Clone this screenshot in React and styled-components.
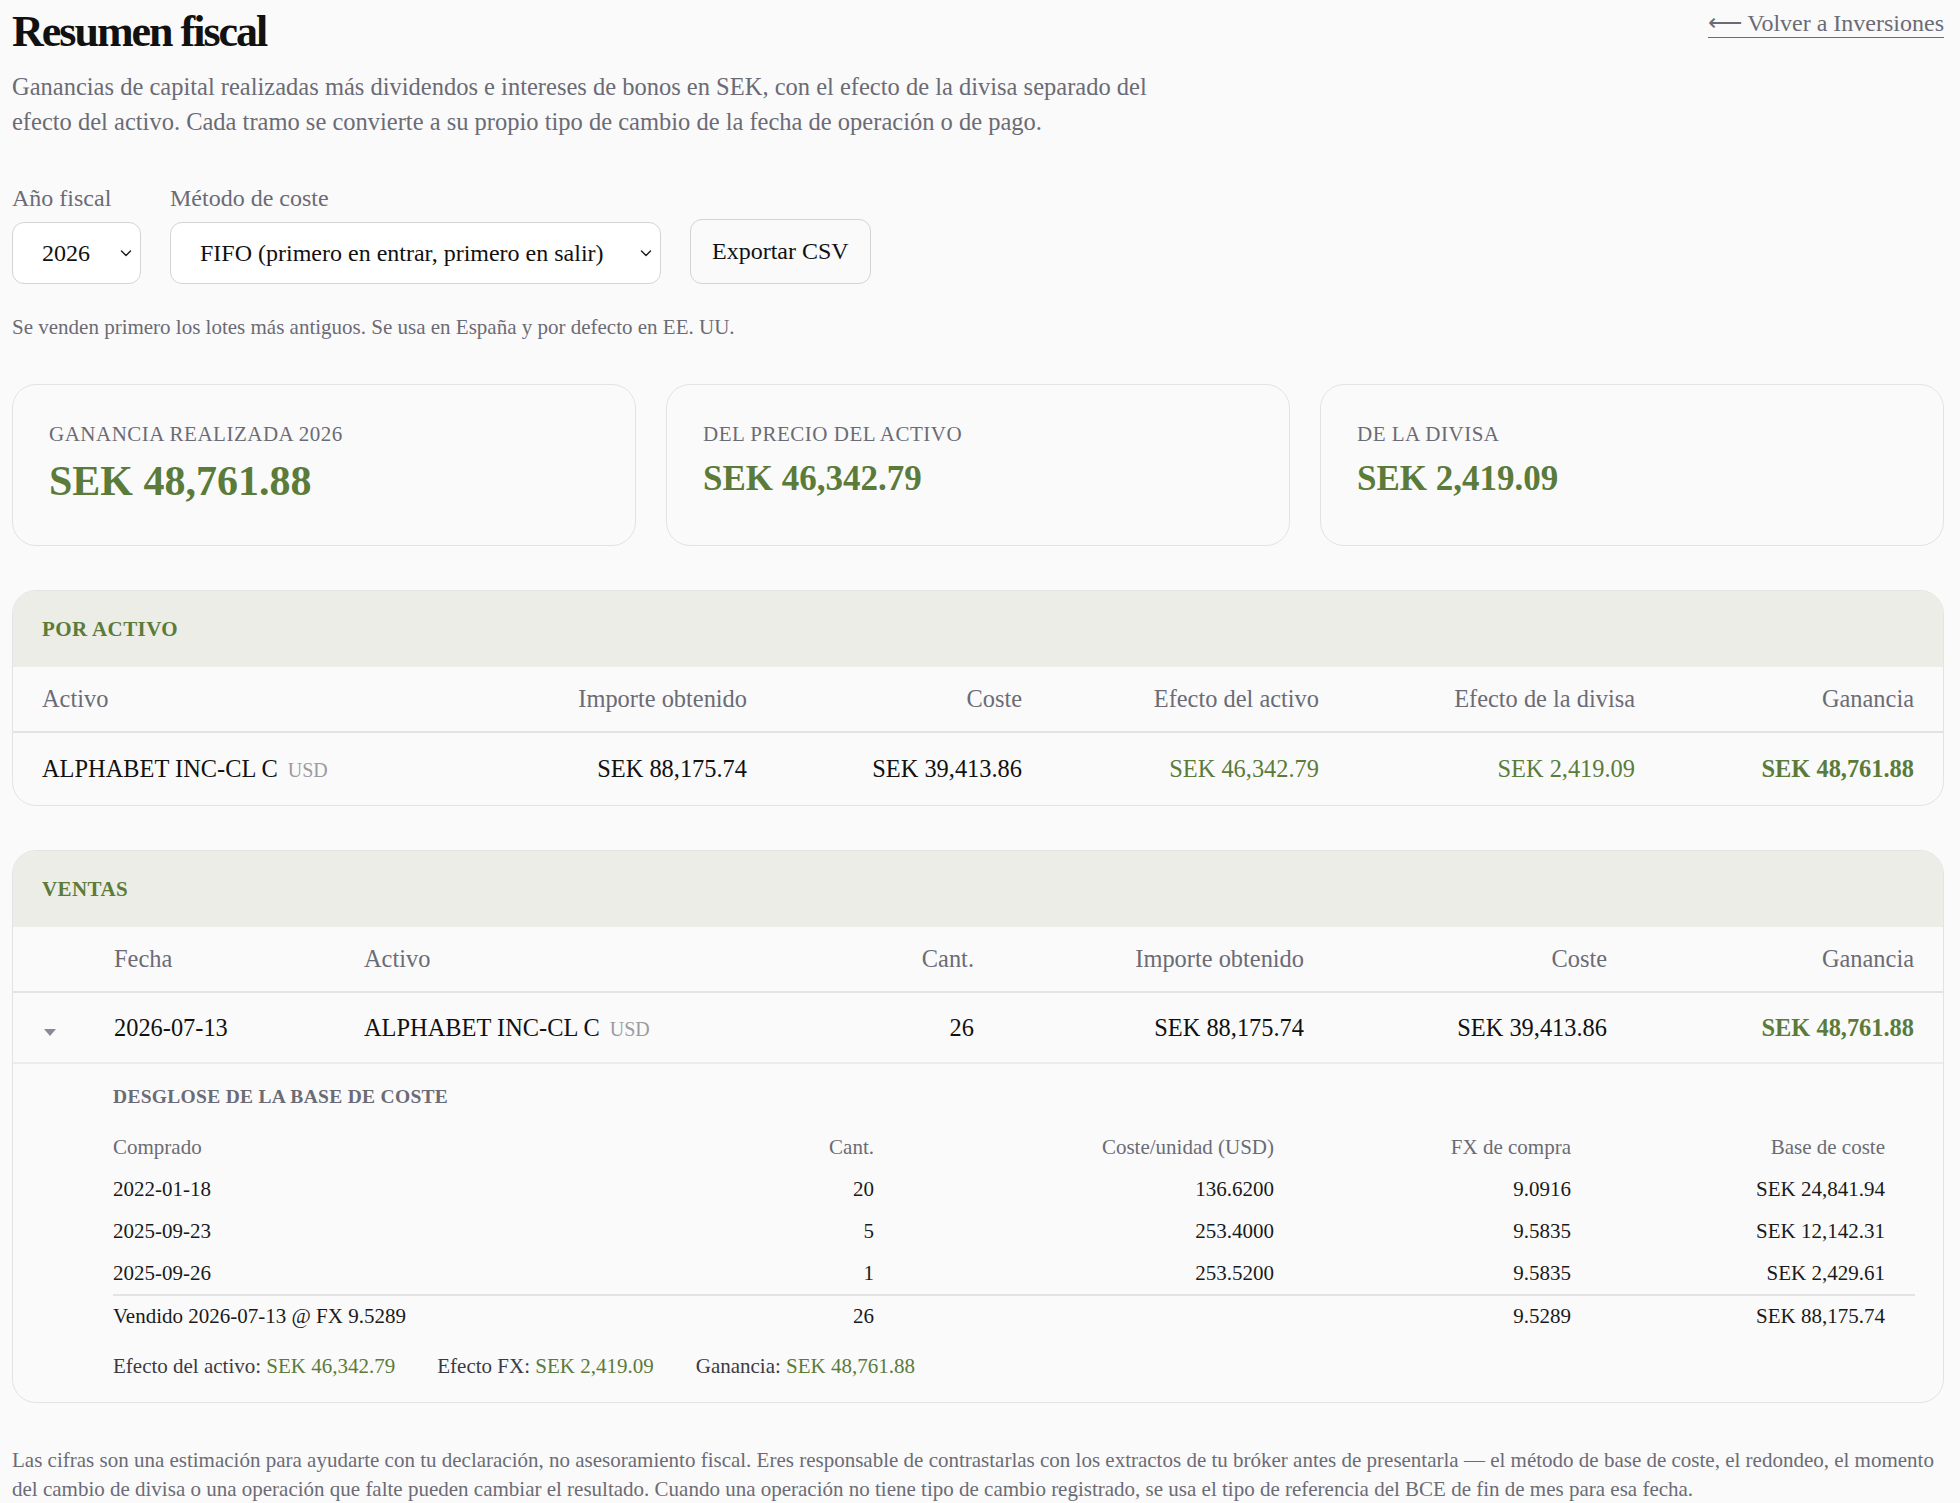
import React from 'react';
import styled, { createGlobalStyle } from 'styled-components';

const green = '#5b7b3a';
const muted = '#6b6b76';
const line = '#e3e3e6';

const GlobalStyle = createGlobalStyle`
  *, *::before, *::after { box-sizing: border-box; }
  html, body {
    margin: 0;
    padding: 0;
    background: #fafafa;
    color: #111;
    font-family: "Liberation Serif", "Times New Roman", serif;
  }
`;

const Page = styled.main`
  padding: 7px 16px 12px 12px;
`;

const TopBar = styled.header`
  display: flex;
  justify-content: space-between;
  align-items: flex-start;
`;

const Title = styled.h1`
  margin: 0;
  font-size: 44px;
  font-weight: 700;
  letter-spacing: -2px;
  line-height: 50px;
`;

const BackLink = styled.a`
  margin-top: 2px;
  font-size: 24px;
  line-height: 28px;
  color: ${muted};
  text-decoration: none;
  border-bottom: 1.5px solid ${muted};
`;

const Lead = styled.p`
  margin: 12px 0 0;
  max-width: 1160px;
  font-size: 24.5px;
  line-height: 35px;
  color: ${muted};
`;

const Controls = styled.div`
  display: flex;
  align-items: flex-end;
  gap: 29px;
  margin-top: 45px;
`;

const Field = styled.label`
  display: flex;
  flex-direction: column;
  gap: 10px;
  font-size: 24px;
  line-height: 28px;
  color: ${muted};
`;

const SelectWrap = styled.div`
  position: relative;
  width: ${p => p.$w}px;

  svg {
    position: absolute;
    right: 8px;
    top: 50%;
    transform: translateY(-50%);
    pointer-events: none;
  }
`;

const Select = styled.select`
  appearance: none;
  width: 100%;
  height: 62px;
  padding: 0 36px 0 29px;
  border: 1.5px solid #d4d4d8;
  border-radius: 12px;
  background: #fff;
  font-family: inherit;
  font-size: 24px;
  color: #111;
`;

const Button = styled.button`
  height: 65px;
  padding: 0 21px;
  border: 1.5px solid #d4d4d8;
  border-radius: 12px;
  background: #fafafa;
  font-family: inherit;
  font-size: 24px;
  color: #111;
`;

const Hint = styled.p`
  margin: 31px 0 0;
  font-size: 21px;
  line-height: 24px;
  color: ${muted};
`;

const Cards = styled.div`
  display: grid;
  grid-template-columns: repeat(3, 1fr);
  gap: 30px;
  margin-top: 45px;
`;

const Card = styled.div`
  height: 162px;
  padding: 37px 36px 0;
  border: 1.5px solid ${line};
  border-radius: 24px;
`;

const CardLabel = styled.div`
  font-size: 21px;
  line-height: 24px;
  letter-spacing: 0.5px;
  color: ${muted};
  text-transform: uppercase;
`;

const CardValue = styled.div`
  margin-top: ${p => (p.$big ? 10 : 8)}px;
  font-size: ${p => (p.$big ? 42 : 35)}px;
  line-height: 50px;
  font-weight: 700;
  color: ${green};
`;

const Section = styled.section`
  margin-top: 44px;
  border: 1.5px solid ${line};
  border-radius: 24px;
  overflow: hidden;
`;

const SectionHead = styled.h2`
  margin: 0;
  height: 76px;
  display: flex;
  align-items: center;
  padding: 0 29px;
  background: #ecede6;
  font-size: 21px;
  font-weight: 700;
  letter-spacing: 0.4px;
  color: ${green};
  text-transform: uppercase;
`;

const Row = styled.div`
  display: grid;
  grid-template-columns: ${p => p.$cols};
  align-items: center;
  height: ${p => p.$h}px;
  padding: 0 28px 0 29px;
  border-top: ${p => (p.$divider ? `2px solid ${line}` : 'none')};
  font-size: 24.4px;
  color: ${p => (p.$head ? muted : '#111')};
`;

const Cell = styled.div`
  text-align: ${p => (p.$right ? 'right' : 'left')};
  color: ${p => (p.$green ? green : 'inherit')};
  font-weight: ${p => (p.$bold ? 700 : 400)};
  white-space: nowrap;
`;

const Ccy = styled.span`
  margin-left: 10px;
  font-size: 20px;
  color: #9a9aa2;
`;

const Caret = styled.span`
  display: inline-block;
  width: 0;
  height: 0;
  margin-left: 2px;
  border-left: 6px solid transparent;
  border-right: 6px solid transparent;
  border-top: 7px solid #8a8a94;
`;

const Detail = styled.div`
  border-top: 2px solid #ececee;
  padding: 21px 28px 24px 100px;
`;

const DetailTitle = styled.h3`
  margin: 0;
  font-size: 19.5px;
  line-height: 24px;
  font-weight: 700;
  letter-spacing: 0.3px;
  color: ${muted};
  text-transform: uppercase;
`;

const SubTable = styled.div`
  margin-top: 17px;
`;

const SubRow = styled.div`
  display: grid;
  grid-template-columns: 500px 261px 400px 297px 314px;
  align-items: center;
  height: 42px;
  padding-right: 28px;
  font-size: 21px;
  color: ${p => (p.$head ? muted : '#1a1a1a')};
  border-top: ${p => (p.$divider ? `2px solid ${line}` : 'none')};
`;

const SubCell = styled.div`
  text-align: ${p => (p.$right ? 'right' : 'left')};
  white-space: nowrap;
`;

const Summary = styled.div`
  display: flex;
  gap: 42px;
  margin-top: 18px;
  font-size: 21px;
  line-height: 24px;
  color: #3a3a44;

  b {
    font-weight: 400;
    color: ${green};
  }
`;

const Footnote = styled.p`
  margin: 43px 0 0;
  font-size: 21px;
  line-height: 29px;
  color: ${muted};
`;

const Chevron = () => (
  <svg width="14" height="14" viewBox="0 0 14 14" fill="none">
    <path d="M2.5 5l4.5 4.5 4.5-4.5" stroke="#222" strokeWidth="1.5" strokeLinecap="round" strokeLinejoin="round" />
  </svg>
);

const assetCols = '400px 305px 275px 297px 316px 279px';
const saleCols = '72px 250px 410px 200px 330px 303px 307px';

const lots = [
  ['2022-01-18', '20', '136.6200', '9.0916', 'SEK 24,841.94'],
  ['2025-09-23', '5', '253.4000', '9.5835', 'SEK 12,142.31'],
  ['2025-09-26', '1', '253.5200', '9.5835', 'SEK 2,429.61'],
];

export default function App() {
  return (
    <Page>
      <GlobalStyle />
      <TopBar>
        <Title>Resumen fiscal</Title>
        <BackLink href="#">⟵ Volver a Inversiones</BackLink>
      </TopBar>
      <Lead>
        Ganancias de capital realizadas más dividendos e intereses de bonos en SEK, con el efecto de la divisa separado del
        efecto del activo. Cada tramo se convierte a su propio tipo de cambio de la fecha de operación o de pago.
      </Lead>

      <Controls>
        <Field>
          Año fiscal
          <SelectWrap $w={129}>
            <Select defaultValue="2026">
              <option>2026</option>
            </Select>
            <Chevron />
          </SelectWrap>
        </Field>
        <Field>
          Método de coste
          <SelectWrap $w={491}>
            <Select defaultValue="fifo">
              <option value="fifo">FIFO (primero en entrar, primero en salir)</option>
            </Select>
            <Chevron />
          </SelectWrap>
        </Field>
        <Button>Exportar CSV</Button>
      </Controls>
      <Hint>Se venden primero los lotes más antiguos. Se usa en España y por defecto en EE. UU.</Hint>

      <Cards>
        <Card>
          <CardLabel>Ganancia realizada 2026</CardLabel>
          <CardValue $big>SEK 48,761.88</CardValue>
        </Card>
        <Card>
          <CardLabel>Del precio del activo</CardLabel>
          <CardValue>SEK 46,342.79</CardValue>
        </Card>
        <Card>
          <CardLabel>De la divisa</CardLabel>
          <CardValue>SEK 2,419.09</CardValue>
        </Card>
      </Cards>

      <Section>
        <SectionHead>Por activo</SectionHead>
        <Row $cols={assetCols} $h={64} $head>
          <Cell>Activo</Cell>
          <Cell $right>Importe obtenido</Cell>
          <Cell $right>Coste</Cell>
          <Cell $right>Efecto del activo</Cell>
          <Cell $right>Efecto de la divisa</Cell>
          <Cell $right>Ganancia</Cell>
        </Row>
        <Row $cols={assetCols} $h={74} $divider>
          <Cell>ALPHABET INC-CL C<Ccy>USD</Ccy></Cell>
          <Cell $right>SEK 88,175.74</Cell>
          <Cell $right>SEK 39,413.86</Cell>
          <Cell $right $green>SEK 46,342.79</Cell>
          <Cell $right $green>SEK 2,419.09</Cell>
          <Cell $right $green $bold>SEK 48,761.88</Cell>
        </Row>
      </Section>

      <Section>
        <SectionHead>Ventas</SectionHead>
        <Row $cols={saleCols} $h={64} $head>
          <Cell />
          <Cell>Fecha</Cell>
          <Cell>Activo</Cell>
          <Cell $right>Cant.</Cell>
          <Cell $right>Importe obtenido</Cell>
          <Cell $right>Coste</Cell>
          <Cell $right>Ganancia</Cell>
        </Row>
        <Row $cols={saleCols} $h={71} $divider>
          <Cell><Caret /></Cell>
          <Cell>2026-07-13</Cell>
          <Cell>ALPHABET INC-CL C<Ccy>USD</Ccy></Cell>
          <Cell $right>26</Cell>
          <Cell $right>SEK 88,175.74</Cell>
          <Cell $right>SEK 39,413.86</Cell>
          <Cell $right $green $bold>SEK 48,761.88</Cell>
        </Row>
        <Detail>
          <DetailTitle>Desglose de la base de coste</DetailTitle>
          <SubTable>
            <SubRow $head>
              <SubCell>Comprado</SubCell>
              <SubCell $right>Cant.</SubCell>
              <SubCell $right>Coste/unidad (USD)</SubCell>
              <SubCell $right>FX de compra</SubCell>
              <SubCell $right>Base de coste</SubCell>
            </SubRow>
            {lots.map(l => (
              <SubRow key={l[0]}>
                {l.map((v, i) => (
                  <SubCell key={i} $right={i > 0}>{v}</SubCell>
                ))}
              </SubRow>
            ))}
            <SubRow $divider>
              <SubCell>Vendido 2026-07-13 @ FX 9.5289</SubCell>
              <SubCell $right>26</SubCell>
              <SubCell $right></SubCell>
              <SubCell $right>9.5289</SubCell>
              <SubCell $right>SEK 88,175.74</SubCell>
            </SubRow>
          </SubTable>
          <Summary>
            <span>Efecto del activo: <b>SEK 46,342.79</b></span>
            <span>Efecto FX: <b>SEK 2,419.09</b></span>
            <span>Ganancia: <b>SEK 48,761.88</b></span>
          </Summary>
        </Detail>
      </Section>

      <Footnote>
        Las cifras son una estimación para ayudarte con tu declaración, no asesoramiento fiscal. Eres responsable de contrastarlas con los extractos de tu bróker antes de presentarla — el método de base de coste, el redondeo, el momento
        del cambio de divisa o una operación que falte pueden cambiar el resultado. Cuando una operación no tiene tipo de cambio registrado, se usa el tipo de referencia del BCE de fin de mes para esa fecha.
      </Footnote>
    </Page>
  );
}
